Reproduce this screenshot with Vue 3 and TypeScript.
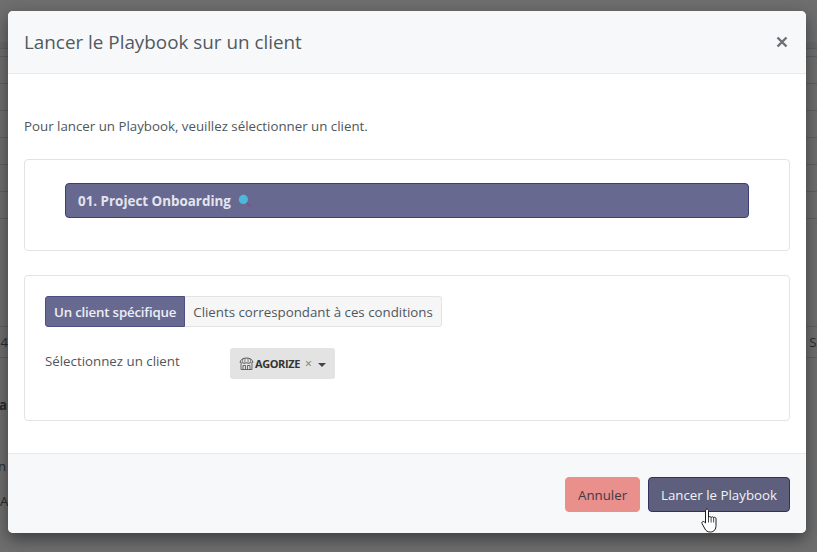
<script setup lang="ts">
const rowCount: number = 6
</script>

<template>
  <div class="page">
    <div class="backdrop-lines">
      <div class="bg-head"></div>
      <div class="bg-sub"></div>
      <div v-for="i in rowCount" :key="i" class="bg-row"></div>
      <div class="bg-gap"></div>
      <div class="bg-text"><span class="left">24</span><span class="right">Se</span></div>
      <div class="bg-plain"></div>
      <div class="bg-note bold">a</div>
      <div class="bg-note n">n</div>
      <div class="bg-note a">A:</div>
    </div>
    <div class="overlay"></div>
    <section class="modal">
      <header class="modal-head">
        <h2>Lancer le Playbook sur un client</h2>
        <svg class="close" width="12" height="12" viewBox="0 0 12 12" aria-label="Fermer">
          <path d="M1.500 1.500l9 9M10.500 1.500l-9 9" stroke="#6c6f73" stroke-width="2.400" fill="none" />
        </svg>
      </header>
      <div class="modal-body">
        <p class="intro">Pour lancer un Playbook, veuillez sélectionner un client.</p>
        <div class="card card-top">
          <div class="playbook">
            <span>01. Project Onboarding</span>
            <svg width="14" height="14" viewBox="0 0 14 14" class="loupe">
              <path d="M8.600 8.600L12.400 12.400" stroke="#8a4a93" stroke-width="2" stroke-linecap="round" />
              <circle cx="5.400" cy="5.400" r="4.600" fill="#4db8dc" />
            </svg>
          </div>
        </div>
        <div class="card card-bottom">
          <div class="tabs">
            <button class="tab active">Un client spécifique</button>
            <button class="tab">Clients correspondant à ces conditions</button>
          </div>
          <div class="field">
            <label>Sélectionnez un client</label>
            <div class="select">
              <svg width="15" height="13" viewBox="0 0 15 13" class="store">
                <path d="M1 5.500C1.500 2.500 4 1 7.500 1S13.500 2.500 14 5.500Q12.800 7 11.300 5.700Q9.500 7 7.500 5.700Q5.500 7 3.700 5.700Q2.200 7 1 5.500Z" fill="none" stroke="#4a4a4a" stroke-width=".9" />
                <path d="M4 1.800L3 5.500M6.200 1.200L5.700 5.500M8.800 1.200L9.300 5.500M11 1.800L12 5.500" stroke="#4a4a4a" stroke-width=".6" />
                <path d="M2 7v5.500h11V7M4 12.500V8.500h2.500v4M8.500 8.500h2.500v4M8.500 8.500v4" fill="none" stroke="#4a4a4a" stroke-width=".8" />
              </svg>
              <b>AGORIZE</b>
              <span class="x">×</span>
              <span class="caret"></span>
            </div>
          </div>
        </div>
      </div>
      <footer class="modal-foot">
        <button class="btn cancel">Annuler</button>
        <button class="btn run">Lancer le Playbook</button>
      </footer>
    </section>
    <svg class="cursor" width="18" height="26" viewBox="0 0 18 26">
      <path d="M5 1.500c1-.8 2.300-.3 2.500 1V9.500c.4-1.200 2.300-1.200 2.600 0 .4-1 2.200-1 2.500.3.500-.8 2.200-.6 2.400.7v7c0 3.500-1.800 6.500-5.500 6.500-3 0-4.300-1-5.500-3L1 15.500c-.7-1.300 1-2.800 2.300-1.600L4.500 15V3c0-.6.100-1.100.5-1.500z" fill="#fff" stroke="#1b1b1b" stroke-width="1" stroke-linejoin="round" />
      <path d="M7.500 9.500v5M10.100 9.500v5M12.600 10v4.500" stroke="#1b1b1b" stroke-width=".8" />
    </svg>
  </div>
</template>

<style>
html, body { margin: 0; overflow: hidden; }
</style>

<style scoped>
.page {
  position: relative;
  width: 817px;
  height: 552px;
  overflow: hidden;
  background: #fff;
  font-family: "Open Sans", "Noto Sans", sans-serif;
  color: #50565c;
}
.backdrop-lines { padding-top: 42px; font-size: 13.300px; color: #666; }
.bg-head { height: 6px; background: #f2f2f2; border-bottom: 1px solid #ddd; box-sizing: content-box; }
.bg-sub { height: 7px; border-bottom: 1px solid #ddd; }
.bg-row { height: 26px; border-bottom: 1px solid #ddd; }
.bg-gap { height: 107px; border-bottom: 1px solid #ddd; }
.bg-text {
  display: flex;
  justify-content: space-between;
  align-items: center;
  height: 30px;
  border-bottom: 1px solid #ddd;
}
.left { margin-left: -7px; }
.right { margin-right: -7px; }
.bg-plain { height: 37px; }
.bg-note { height: 20px; line-height: 20px; }
.bg-note.bold { font-weight: 700; margin-left: -1px; }
.bg-note.n { margin-top: 41px; margin-left: -2px; }
.bg-note.a { margin-top: 15px; }
.overlay { position: absolute; inset: 0; background: rgba(0, 0, 0, .57); }
.modal {
  position: absolute;
  left: 8px;
  top: 11px;
  width: 798px;
  height: 522px;
  display: flex;
  flex-direction: column;
  background: #fff;
  border-radius: 5px;
  box-shadow: 0 6px 16px rgba(0, 0, 0, .45);
  overflow: hidden;
}
.modal-head {
  height: 62px;
  flex: none;
  display: flex;
  align-items: center;
  justify-content: space-between;
  padding: 0 18px 0 16px;
  background: #f7f8fa;
  border-bottom: 1px solid #e7e9ec;
}
h2 { margin: 0; font-size: 18.850px; font-weight: 400; color: #53595f; }
.modal-body { flex: 1; padding: 43px 16px 0; }
.intro { margin: 0 0 24px; font-size: 13.300px; line-height: 18px; }
.card { border: 1px solid #e2e3e5; border-radius: 4px; background: #fff; }
.card-top { height: 92px; box-sizing: border-box; padding: 23px 40px; margin-bottom: 24px; }
.playbook {
  height: 35px;
  box-sizing: border-box;
  display: flex;
  align-items: center;
  gap: 7px;
  padding: 0 12px;
  background: #676990;
  border: 1px solid #3d3f74;
  border-radius: 4px;
  color: #e4e4ee;
  font-size: 13.400px;
  font-weight: 700;
}
.card-bottom { height: 146px; box-sizing: border-box; padding: 20px; }
.tabs { display: flex; }
.tab {
  height: 31px;
  box-sizing: border-box;
  padding: 0 8px;
  font: inherit;
  font-size: 13.300px;
  background: #f6f6f7;
  border: 1px solid #e4e4e6;
  border-left: 0;
  border-radius: 0 3px 3px 0;
  color: #50565c;
}
.tab.active {
  background: #676990;
  border: 1px solid #4d4f80;
  border-radius: 3px 0 0 3px;
  color: #eeeef4;
  font-weight: 600;
  letter-spacing: -.2px;
}
.field { display: flex; align-items: flex-start; margin-top: 21px; }
label { width: 185px; font-size: 13.300px; line-height: 26px; }
.select {
  width: 105px;
  height: 31px;
  box-sizing: border-box;
  display: flex;
  align-items: center;
  padding-left: 9px;
  background: #e3e3e3;
  border-radius: 3px;
  color: #333;
  font-size: 11px;
}
.store { margin-right: 1px; flex: none; }
.select b { letter-spacing: -.4px; }
.x { margin-left: 5px; color: #777; font-size: 12px; }
.caret {
  margin-left: 6px;
  border-left: 4px solid transparent;
  border-right: 4px solid transparent;
  border-top: 4px solid #444;
  margin-top: 3px;
}
.modal-foot {
  height: 80px;
  flex: none;
  box-sizing: border-box;
  display: flex;
  justify-content: flex-end;
  align-items: flex-start;
  gap: 8px;
  padding: 23px 16px 0;
  background: #f7f8fa;
  border-top: 1px solid #e7e9ec;
}
.btn {
  height: 35px;
  box-sizing: border-box;
  font: inherit;
  font-size: 13.300px;
  border-radius: 4px;
  padding: 0 12px;
}
.cancel { width: 75px; background: #e98f8c; border: 1px solid #e98f8c; color: #3f3a44; }
.run { width: 142px; background: #5d5f7c; border: 1px solid #2f3160; color: #f2f2f6; }
.loupe { flex: none; }
.cursor { position: absolute; left: 701px; top: 508px; }
</style>
